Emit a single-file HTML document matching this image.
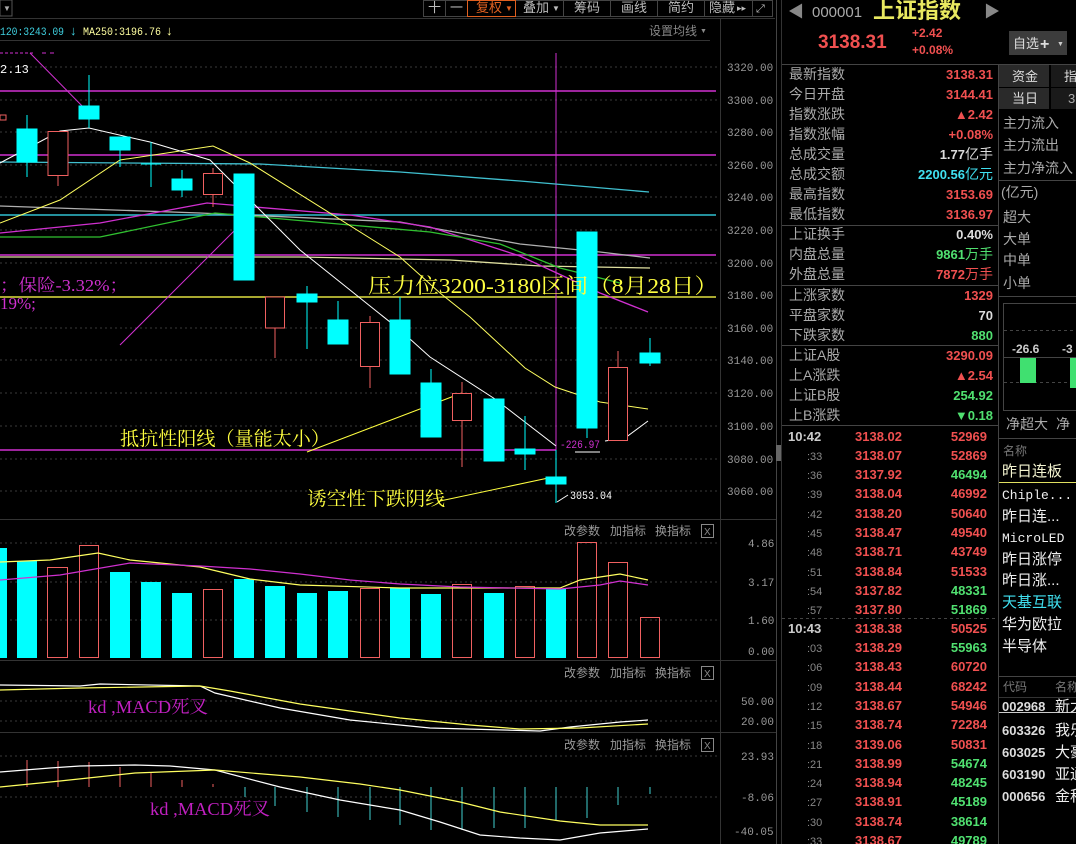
<!DOCTYPE html>
<html><head><meta charset="utf-8">
<style>
html,body{margin:0;padding:0;background:#000;width:1076px;height:844px;overflow:hidden}
svg{display:block}
text{font-family:"Liberation Sans","Noto Sans CJK SC",sans-serif}
text.m{font-family:"Liberation Mono","Noto Sans CJK SC",monospace}
text.s{font-family:"Liberation Serif","Noto Serif CJK SC",serif}
</style></head><body>
<svg width="1076" height="844" viewBox="0 0 1076 844" xmlns="http://www.w3.org/2000/svg">
<rect width="1076" height="844" fill="#000"/>
<rect x="0" y="0" width="12" height="16" fill="none" stroke="#555"/>
<text x="3" y="11" fill="#aaa" font-size="8">▼</text>
<g stroke="#444" fill="none">
<rect x="423.5" y="0.5" width="349" height="16"/>
<line x1="445.5" y1="0" x2="445.5" y2="16"/><line x1="515.5" y1="0" x2="515.5" y2="16"/><line x1="563.5" y1="0" x2="563.5" y2="16"/><line x1="610.5" y1="0" x2="610.5" y2="16"/><line x1="657.5" y1="0" x2="657.5" y2="16"/><line x1="704.5" y1="0" x2="704.5" y2="16"/><line x1="752.5" y1="0" x2="752.5" y2="16"/>
</g>
<rect x="467.5" y="0.5" width="48" height="16" fill="none" stroke="#e06020"/>
<g font-size="13" fill="#bbb">
<text x="428" y="12">十</text><text x="450" y="12">一</text>
<text x="476" y="12" fill="#e06020">复权</text><text x="505" y="11" font-size="8" fill="#e06020">▼</text>
<text x="523" y="12">叠加</text><text x="552" y="11" font-size="8">▼</text>
<text x="574" y="12">筹码</text><text x="621" y="12">画线</text><text x="668" y="12">简约</text>
<text x="709" y="12">隐藏</text><text x="737" y="11" font-size="9">▸▸</text>
<text x="756" y="12" font-size="11">⤢</text>
</g>
<line x1="0" y1="18.5" x2="775" y2="18.5" stroke="#333"/>
<text x="0" y="35" class="m" font-size="11" fill="#3fd0e0" textLength="64" lengthAdjust="spacingAndGlyphs">120:3243.09</text>
<text x="70" y="35" font-size="13" fill="#3fd0e0">↓</text>
<text x="83" y="35" class="m" font-size="11" fill="#ffffa0" textLength="78" lengthAdjust="spacingAndGlyphs">MA250:3196.76</text>
<text x="166" y="35" font-size="13" fill="#ffffa0">↓</text>
<text x="649" y="35" font-size="12" fill="#888">设置均线</text><text x="700" y="33" font-size="7" fill="#888">▼</text>
<line x1="0" y1="40.5" x2="710" y2="40.5" stroke="#333"/>
<line x1="720.5" y1="18" x2="720.5" y2="844" stroke="#333"/>
<line x1="776.5" y1="0" x2="776.5" y2="844" stroke="#444"/>
<line x1="781.5" y1="0" x2="781.5" y2="844" stroke="#333"/>
<g stroke="#3a3a3a" stroke-dasharray="2,3">
<line x1="0" y1="67" x2="720" y2="67"/><line x1="0" y1="100" x2="720" y2="100"/><line x1="0" y1="132" x2="720" y2="132"/><line x1="0" y1="165" x2="720" y2="165"/><line x1="0" y1="197" x2="720" y2="197"/><line x1="0" y1="230" x2="720" y2="230"/><line x1="0" y1="263" x2="720" y2="263"/><line x1="0" y1="328" x2="720" y2="328"/><line x1="0" y1="360" x2="720" y2="360"/><line x1="0" y1="393" x2="720" y2="393"/><line x1="0" y1="426" x2="720" y2="426"/><line x1="0" y1="459" x2="720" y2="459"/><line x1="0" y1="491" x2="720" y2="491"/>
<line x1="0" y1="543" x2="720" y2="543"/><line x1="0" y1="582" x2="720" y2="582"/><line x1="0" y1="620" x2="720" y2="620"/>
<line x1="0" y1="701" x2="720" y2="701"/><line x1="0" y1="721" x2="720" y2="721"/>
<line x1="0" y1="756" x2="720" y2="756"/><line x1="0" y1="797" x2="720" y2="797"/>
</g>
<g font-size="11" fill="#999">
<text class="m" x="727" y="71">3320.00</text><text class="m" x="727" y="104">3300.00</text><text class="m" x="727" y="136">3280.00</text><text class="m" x="727" y="169">3260.00</text><text class="m" x="727" y="201">3240.00</text><text class="m" x="727" y="234">3220.00</text><text class="m" x="727" y="267">3200.00</text><text class="m" x="727" y="299">3180.00</text><text class="m" x="727" y="332">3160.00</text><text class="m" x="727" y="364">3140.00</text><text class="m" x="727" y="397">3120.00</text><text class="m" x="727" y="430">3100.00</text><text class="m" x="727" y="463">3080.00</text><text class="m" x="727" y="495">3060.00</text>
<text class="m" x="748" y="547">4.86</text><text class="m" x="748" y="586">3.17</text><text class="m" x="748" y="624">1.60</text><text class="m" x="748" y="655">0.00</text>
<text class="m" x="741" y="705">50.00</text><text class="m" x="741" y="725">20.00</text>
<text class="m" x="741" y="760">23.93</text><text class="m" x="741" y="801">-8.06</text><text class="m" x="734" y="835">-40.05</text>
</g>
<g stroke-width="1.5">
<line x1="0" y1="91" x2="716" y2="91" stroke="#d030d0"/>
<line x1="0" y1="155" x2="716" y2="155" stroke="#d030d0"/>
<line x1="0" y1="255" x2="716" y2="255" stroke="#d030d0"/>
<line x1="0" y1="215" x2="716" y2="215" stroke="#30c0d0"/>
<line x1="0" y1="297" x2="716" y2="297" stroke="#e0e040"/>
<line x1="0" y1="450" x2="556" y2="450" stroke="#d030d0"/>
</g>
<line x1="556" y1="53" x2="556" y2="450" stroke="#d030d0"/>
<g fill="none" stroke-width="1.3">
<polyline stroke="#40c0d0" points="0,162 260,164 400,172 520,181 649,192"/>
<polyline stroke="#b0b0b0" points="0,206 200,213 400,222 520,244 600,252 650,258"/>
<polyline stroke="#e0e0a0" points="0,257 300,257 450,260 540,266 650,268"/>
<polyline stroke="#d030d0" points="0,233 100,223 207,203 350,215 430,227 520,256 600,293 648,312"/>
<polyline stroke="#30c030" points="0,237 100,237 215,213 350,225 430,232 500,244 560,268 620,283"/>
<polyline stroke="#ffff60" stroke-width="1" points="0,223 60,200 120,160 213,146 250,163 400,257 440,293 470,317 525,368 555,387 600,402 648,409"/>
<polyline stroke="#fff" stroke-width="1" points="0,163 60,131 89,128 150,142 210,160 245,195 300,250 350,290 400,330 430,357 495,399 556,446"/>
<polyline stroke="#fff" stroke-width="1" points="605,441 625,438 648,421"/>
<polyline stroke="#d030d0" stroke-width="1" points="30,53 89,113"/>
<polyline stroke="#d030d0" stroke-width="1" points="120,345 245,220"/>
<polyline stroke="#d030d0" stroke-width="1" stroke-dasharray="3,2" points="0,53 35,53"/>
<polyline stroke="#d030d0" stroke-width="1" stroke-dasharray="4,4" points="42,53 54,53"/>
<polyline stroke="#ffff40" stroke-width="1" points="307,452 462,393"/>
<polyline stroke="#ffff40" stroke-width="1" points="440,501 553,477"/>
<polyline stroke="#fff" stroke-width="1" points="600,452 575,452"/>
</g>
<g stroke="#00ffff" fill="#00ffff">
<line x1="27" y1="115" x2="27" y2="177"/><rect x="17" y="129" width="20" height="33"/>
<line x1="89" y1="75" x2="89" y2="128"/><rect x="79" y="106" width="20" height="13"/>
<line x1="120" y1="137" x2="120" y2="167"/><rect x="110" y="137" width="20" height="13"/>
<line x1="151" y1="142" x2="151" y2="187"/><line x1="141" y1="164" x2="161" y2="164"/>
<line x1="182" y1="170" x2="182" y2="197"/><rect x="172" y="179" width="20" height="11"/>
<rect x="234" y="174" width="20" height="106"/>
<line x1="307" y1="286" x2="307" y2="349"/><rect x="297" y="294" width="20" height="8"/>
<line x1="338" y1="301" x2="338" y2="344"/><rect x="328" y="320" width="20" height="24"/>
<line x1="400" y1="297" x2="400" y2="374"/><rect x="390" y="320" width="20" height="54"/>
<line x1="431" y1="369" x2="431" y2="437"/><rect x="421" y="383" width="20" height="54"/>
<rect x="484" y="399" width="20" height="62"/>
<line x1="525" y1="416" x2="525" y2="470"/><rect x="515" y="449" width="20" height="5"/>
<line x1="556" y1="450" x2="556" y2="503"/><rect x="546" y="477" width="20" height="7"/>
<line x1="587" y1="232" x2="587" y2="438"/><rect x="577" y="232" width="20" height="196"/>
<line x1="650" y1="338" x2="650" y2="366"/><rect x="640" y="353" width="20" height="10"/>
</g>
<g stroke="#f06060" fill="#000">
<rect x="0" y="115" width="6" height="5"/>
<line x1="58" y1="175" x2="58" y2="186"/><rect x="48" y="131.5" width="20" height="44"/>
<line x1="213" y1="168" x2="213" y2="207"/><rect x="203.5" y="173.5" width="19" height="21"/>
<line x1="275" y1="297" x2="275" y2="358"/><rect x="265.5" y="297" width="19" height="31"/>
<line x1="370" y1="316" x2="370" y2="388"/><rect x="360.5" y="322.5" width="19" height="44"/>
<line x1="462" y1="382" x2="462" y2="467"/><rect x="452.5" y="393.5" width="19" height="27"/>
<line x1="618" y1="351" x2="618" y2="367"/><rect x="608.5" y="367.5" width="19" height="73"/>
</g>
<text class="s" x="368" y="293" font-size="21" fill="#ffff40" textLength="350" lengthAdjust="spacingAndGlyphs">压力位3200-3180区间（8月28日）</text>
<text class="s" x="0" y="291" font-size="17" fill="#d030d0" textLength="128" lengthAdjust="spacingAndGlyphs">；保险-3.32%；</text>
<text class="s" x="0" y="309" font-size="17" fill="#d030d0">19%;</text>
<text class="m" x="0" y="73" font-size="12" fill="#fff">2.13</text>
<text class="s" x="120" y="445" font-size="19" fill="#ffff40" textLength="210" lengthAdjust="spacingAndGlyphs">抵抗性阳线（量能太小）</text>
<text class="s" x="307" y="505" font-size="19" fill="#ffff40" textLength="138" lengthAdjust="spacingAndGlyphs">诱空性下跌阴线</text>
<text class="m" x="560" y="448" font-size="11" fill="#d030d0" textLength="40" lengthAdjust="spacingAndGlyphs">-226.97</text>
<text class="m" x="570" y="499" font-size="11" fill="#fff" textLength="42" lengthAdjust="spacingAndGlyphs">3053.04</text>
<line x1="568" y1="495" x2="557" y2="502" stroke="#fff"/>
<line x1="0" y1="519.5" x2="776" y2="519.5" stroke="#333"/>
<line x1="0" y1="660.5" x2="776" y2="660.5" stroke="#333"/>
<line x1="0" y1="732.5" x2="776" y2="732.5" stroke="#333"/>
<g font-size="12" fill="#999">
<text x="564" y="535">改参数</text><text x="610" y="535">加指标</text><text x="655" y="535">换指标</text>
<text x="564" y="677">改参数</text><text x="610" y="677">加指标</text><text x="655" y="677">换指标</text>
<text x="564" y="749">改参数</text><text x="610" y="749">加指标</text><text x="655" y="749">换指标</text>
</g>
<g fill="none" stroke="#888">
<rect x="701.5" y="524.5" width="12" height="13"/><rect x="701.5" y="666.5" width="12" height="13"/><rect x="701.5" y="738.5" width="12" height="13"/>
</g>
<g font-size="10" fill="#888"><text x="704" y="535">X</text><text x="704" y="677">X</text><text x="704" y="749">X</text></g>
<g fill="#00ffff">
<rect x="0" y="548" width="7" height="110"/><rect x="17" y="561" width="20" height="97"/><rect x="110" y="572" width="20" height="86"/><rect x="141" y="582" width="20" height="76"/><rect x="172" y="593" width="20" height="65"/><rect x="234" y="579" width="20" height="79"/><rect x="265" y="586" width="20" height="72"/><rect x="297" y="593" width="20" height="65"/><rect x="328" y="591" width="20" height="67"/><rect x="390" y="588" width="20" height="70"/><rect x="421" y="594" width="20" height="64"/><rect x="484" y="593" width="20" height="65"/><rect x="546" y="589" width="20" height="69"/>
</g>
<g fill="none" stroke="#f06060">
<rect x="47.5" y="567.5" width="20" height="90"/><rect x="79.5" y="545.5" width="19" height="112"/><rect x="203.5" y="589.5" width="19" height="68"/><rect x="360.5" y="588.5" width="19" height="69"/><rect x="452.5" y="584.5" width="19" height="73"/><rect x="515.5" y="586.5" width="19" height="71"/><rect x="577.5" y="542.5" width="19" height="115"/><rect x="608.5" y="562.5" width="19" height="95"/><rect x="640.5" y="617.5" width="19" height="40"/>
</g>
<g fill="none" stroke-width="1.2">
<polyline stroke="#ffff60" points="0,562 50,560 98,553 130,560 200,567 250,579 300,585 400,588 460,588 560,588 580,580 600,577 620,574 648,580"/>
<polyline stroke="#d030d0" points="0,580 60,575 130,563 200,566 250,569 300,574 350,580 400,584 460,587 560,589 600,585 620,581 648,585"/>
</g>
<g fill="none" stroke-width="1.2">
<polyline stroke="#fff" points="0,685 80,686 100,684 200,686 215,693 280,708 350,720 430,728 540,731 570,727 620,722 648,720"/>
<polyline stroke="#ffff60" points="0,690 80,688 200,686 230,691 300,704 400,718 470,725 520,729 580,728 648,724"/>
</g>
<text class="s" x="88" y="713" font-size="18" fill="#c020c0" textLength="120" lengthAdjust="spacingAndGlyphs">kd ,MACD死叉</text>
<g stroke="#f06060">
<line x1="27" y1="760" x2="27" y2="787"/><line x1="58" y1="761" x2="58" y2="787"/><line x1="89" y1="762" x2="89" y2="787"/><line x1="120" y1="767" x2="120" y2="787"/><line x1="151" y1="772" x2="151" y2="787"/><line x1="182" y1="780" x2="182" y2="787"/><line x1="213" y1="784" x2="213" y2="787"/>
</g>
<g stroke="#40d0d0">
<line x1="245" y1="787" x2="245" y2="797"/><line x1="275" y1="787" x2="275" y2="806"/><line x1="307" y1="787" x2="307" y2="812"/><line x1="338" y1="787" x2="338" y2="817"/><line x1="370" y1="787" x2="370" y2="820"/><line x1="400" y1="787" x2="400" y2="825"/><line x1="431" y1="787" x2="431" y2="830"/><line x1="462" y1="787" x2="462" y2="830"/><line x1="494" y1="787" x2="494" y2="828"/><line x1="525" y1="787" x2="525" y2="828"/><line x1="556" y1="787" x2="556" y2="820"/><line x1="587" y1="787" x2="587" y2="818"/><line x1="618" y1="787" x2="618" y2="805"/><line x1="650" y1="787" x2="650" y2="794"/>
</g>
<g fill="none" stroke-width="1.2">
<polyline stroke="#fff" points="0,772 50,768 80,766 135,765 170,766 215,770 280,787 340,800 400,810 440,822 480,835 520,838 560,840 600,833 648,829"/>
<polyline stroke="#ffff60" points="0,787 60,781 135,773 215,770 300,777 360,784 400,790 460,802 500,812 560,821 600,825 648,825"/>
</g>
<text class="s" x="150" y="815" font-size="18" fill="#c020c0" textLength="120" lengthAdjust="spacingAndGlyphs">kd ,MACD死叉</text>

<text x="788" y="17" font-size="16" fill="#888">◀</text>
<text x="812" y="17" font-size="15" fill="#aaa">000001</text>
<text x="873" y="18" font-size="22" font-weight="bold" fill="#e8e860">上证指数</text>
<text x="984" y="17" font-size="16" fill="#888">▶</text>
<text x="818" y="48" font-size="19" font-weight="bold" fill="#f05050">3138.31</text>
<text x="912" y="37" font-size="12" font-weight="bold" fill="#f05050">+2.42</text>
<text x="912" y="54" font-size="12" font-weight="bold" fill="#f05050">+0.08%</text>
<rect x="1009" y="31" width="58" height="24" fill="#3c3c3c"/>
<text x="1013" y="48" font-size="13" fill="#ddd">自选</text><text x="1040" y="49" font-size="16" font-weight="bold" fill="#ddd">+</text><text x="1057" y="46" font-size="7" fill="#ccc">▼</text>
<line x1="782" y1="64.5" x2="1076" y2="64.5" stroke="#444"/>
<line x1="998.5" y1="64" x2="998.5" y2="844" stroke="#444"/>
<g font-size="14" fill="#aaa">
<text x="789" y="79">最新指数</text><text x="789" y="99">今日开盘</text><text x="789" y="119">指数涨跌</text><text x="789" y="139">指数涨幅</text><text x="789" y="159">总成交量</text><text x="789" y="179">总成交额</text><text x="789" y="199">最高指数</text><text x="789" y="219">最低指数</text>
<text x="789" y="239">上证换手</text><text x="789" y="259">内盘总量</text><text x="789" y="279">外盘总量</text>
<text x="789" y="300">上涨家数</text><text x="789" y="320">平盘家数</text><text x="789" y="340">下跌家数</text>
<text x="789" y="360">上证A股</text><text x="789" y="380">上A涨跌</text><text x="789" y="400">上证B股</text><text x="789" y="420">上B涨跌</text>
</g>
<g font-size="13" font-weight="bold" text-anchor="end">
<text x="993" y="79" fill="#f05050">3138.31</text><text x="993" y="99" fill="#f05050">3144.41</text><text x="993" y="119" fill="#f05050">▲2.42</text><text x="993" y="139" fill="#f05050">+0.08%</text>
<text x="993" y="159" fill="#ddd">1.77<tspan font-weight="normal" font-size="14">亿手</tspan></text>
<text x="993" y="179" fill="#40e0f0">2200.56<tspan font-weight="normal" font-size="14">亿元</tspan></text>
<text x="993" y="199" fill="#f05050">3153.69</text><text x="993" y="219" fill="#f05050">3136.97</text>
<text x="993" y="239" fill="#ddd">0.40%</text>
<text x="993" y="259" fill="#50e070">9861<tspan font-weight="normal" font-size="14">万手</tspan></text>
<text x="993" y="279" fill="#f05050">7872<tspan font-weight="normal" font-size="14">万手</tspan></text>
<text x="993" y="300" fill="#f05050">1329</text><text x="993" y="320" fill="#ddd">70</text><text x="993" y="340" fill="#50e070">880</text>
<text x="993" y="360" fill="#f05050">3290.09</text><text x="993" y="380" fill="#f05050">▲2.54</text><text x="993" y="400" fill="#50e070">254.92</text><text x="993" y="420" fill="#50e070">▼0.18</text>
</g>
<g stroke="#444">
<line x1="782" y1="225.5" x2="998" y2="225.5"/><line x1="782" y1="285.5" x2="998" y2="285.5"/><line x1="782" y1="345.5" x2="998" y2="345.5"/><line x1="782" y1="425.5" x2="998" y2="425.5"/>
<line x1="782" y1="618.5" x2="998" y2="618.5" stroke-dasharray="3,3"/>
</g>
<g font-size="13" font-weight="bold">
<text x="788" y="441" fill="#ccc">10:42</text><text x="788" y="633" fill="#ccc">10:43</text>
</g>
<g font-size="11" fill="#888">
<text x="807" y="460">:33</text><text x="807" y="479">:36</text><text x="807" y="498">:39</text><text x="807" y="518">:42</text><text x="807" y="537">:45</text><text x="807" y="556">:48</text><text x="807" y="576">:51</text><text x="807" y="595">:54</text><text x="807" y="614">:57</text>
<text x="807" y="652">:03</text><text x="807" y="671">:06</text><text x="807" y="691">:09</text><text x="807" y="710">:12</text><text x="807" y="729">:15</text><text x="807" y="749">:18</text><text x="807" y="768">:21</text><text x="807" y="787">:24</text><text x="807" y="806">:27</text><text x="807" y="826">:30</text><text x="807" y="845">:33</text>
</g>
<g font-size="13" font-weight="bold" fill="#f05050">
<text x="855" y="441">3138.02</text><text x="855" y="460">3138.07</text><text x="855" y="479">3137.92</text><text x="855" y="498">3138.04</text><text x="855" y="518">3138.20</text><text x="855" y="537">3138.47</text><text x="855" y="556">3138.71</text><text x="855" y="576">3138.84</text><text x="855" y="595">3137.82</text><text x="855" y="614">3137.80</text>
<text x="855" y="633">3138.38</text><text x="855" y="652">3138.29</text><text x="855" y="671">3138.43</text><text x="855" y="691">3138.44</text><text x="855" y="710">3138.67</text><text x="855" y="729">3138.74</text><text x="855" y="749">3139.06</text><text x="855" y="768">3138.99</text><text x="855" y="787">3138.94</text><text x="855" y="806">3138.91</text><text x="855" y="826">3138.74</text><text x="855" y="845">3138.67</text>
</g>
<g font-size="13" font-weight="bold" text-anchor="end">
<text x="987" y="441" fill="#f05050">52969</text><text x="987" y="460" fill="#f05050">52869</text><text x="987" y="479" fill="#50e070">46494</text><text x="987" y="498" fill="#f05050">46992</text><text x="987" y="518" fill="#f05050">50640</text><text x="987" y="537" fill="#f05050">49540</text><text x="987" y="556" fill="#f05050">43749</text><text x="987" y="576" fill="#f05050">51533</text><text x="987" y="595" fill="#50e070">48331</text><text x="987" y="614" fill="#50e070">51869</text>
<text x="987" y="633" fill="#f05050">50525</text><text x="987" y="652" fill="#50e070">55963</text><text x="987" y="671" fill="#f05050">60720</text><text x="987" y="691" fill="#f05050">68242</text><text x="987" y="710" fill="#f05050">54946</text><text x="987" y="729" fill="#f05050">72284</text><text x="987" y="749" fill="#f05050">50831</text><text x="987" y="768" fill="#50e070">54674</text><text x="987" y="787" fill="#50e070">48245</text><text x="987" y="806" fill="#50e070">45189</text><text x="987" y="826" fill="#50e070">38614</text><text x="987" y="845" fill="#50e070">49789</text>
</g>
<rect x="999" y="65" width="50" height="22" fill="#2a2a2a"/><rect x="1051" y="65" width="25" height="22" fill="#1a1a1a"/>
<rect x="999" y="88" width="50" height="21" fill="#2a2a2a"/><rect x="1051" y="88" width="25" height="21" fill="#1a1a1a"/>
<g font-size="13" fill="#ddd"><text x="1012" y="81">资金</text><text x="1064" y="81">指</text><text x="1012" y="103">当日</text><text x="1068" y="103" fill="#aaa">3</text></g>
<g font-size="14" fill="#aaa">
<text x="1003" y="128">主力流入</text><text x="1003" y="150">主力流出</text><text x="1003" y="173">主力净流入</text>
<text x="1001" y="197">(亿元)</text>
<text x="1003" y="222">超大</text><text x="1003" y="244">大单</text><text x="1003" y="265">中单</text><text x="1003" y="288">小单</text>
<text x="1006" y="429">净超大</text><text x="1056" y="429">净</text>
<text x="1003" y="455" font-size="12" fill="#777">名称</text>
<text x="1003" y="691" font-size="12" fill="#777">代码</text><text x="1055" y="691" font-size="12" fill="#777">名称</text>
</g>
<line x1="999" y1="180.5" x2="1076" y2="180.5" stroke="#444"/>
<line x1="999" y1="296.5" x2="1076" y2="296.5" stroke="#444"/>
<rect x="1003.5" y="303.5" width="80" height="107" fill="none" stroke="#444"/>
<line x1="1004" y1="330.5" x2="1076" y2="330.5" stroke="#444" stroke-dasharray="3,3"/>
<line x1="1004" y1="357.5" x2="1076" y2="357.5" stroke="#444"/>
<line x1="1004" y1="382.5" x2="1076" y2="382.5" stroke="#444" stroke-dasharray="3,3"/>
<text x="1012" y="353" font-size="12" fill="#ccc" font-weight="bold">-26.6</text><text x="1062" y="353" font-size="12" fill="#ccc" font-weight="bold">-3</text>
<rect x="1020" y="358" width="16" height="25" fill="#40e070"/><rect x="1070" y="358" width="6" height="30" fill="#40e070"/>
<line x1="999" y1="438.5" x2="1076" y2="438.5" stroke="#444"/>
<line x1="999" y1="482.5" x2="1076" y2="482.5" stroke="#e0e060"/>
<g font-size="15" fill="#eee">
<text x="1002" y="476" fill="#f4f4d0">昨日连板</text>
<text x="1002" y="499" class="m" font-size="13">Chiple...</text>
<text x="1002" y="521">昨日连...</text>
<text x="1002" y="542" class="m" font-size="13">MicroLED</text>
<text x="1002" y="564">昨日涨停</text>
<text x="1002" y="585">昨日涨...</text>
<text x="1002" y="607" fill="#40e0f0">天基互联</text>
<text x="1002" y="629">华为欧拉</text>
<text x="1002" y="651">半导体</text>
</g>
<line x1="999" y1="676.5" x2="1076" y2="676.5" stroke="#444"/>
<line x1="999" y1="697.5" x2="1076" y2="697.5" stroke="#333"/>
<line x1="999" y1="712.5" x2="1076" y2="712.5" stroke="#ccc"/>
<g font-size="13" fill="#ddd" font-weight="bold">
<text x="1002" y="711">002968</text><text x="1002" y="735">603326</text><text x="1002" y="757">603025</text><text x="1002" y="779">603190</text><text x="1002" y="801">000656</text>
</g>
<g font-size="15" fill="#eee">
<text x="1055" y="711">新大</text><text x="1055" y="735">我乐</text><text x="1055" y="757">大豪</text><text x="1055" y="779">亚通</text><text x="1055" y="801">金科</text>
</g>
<rect x="776" y="445" width="5" height="16" fill="#666"/>
</svg>
</body></html>
